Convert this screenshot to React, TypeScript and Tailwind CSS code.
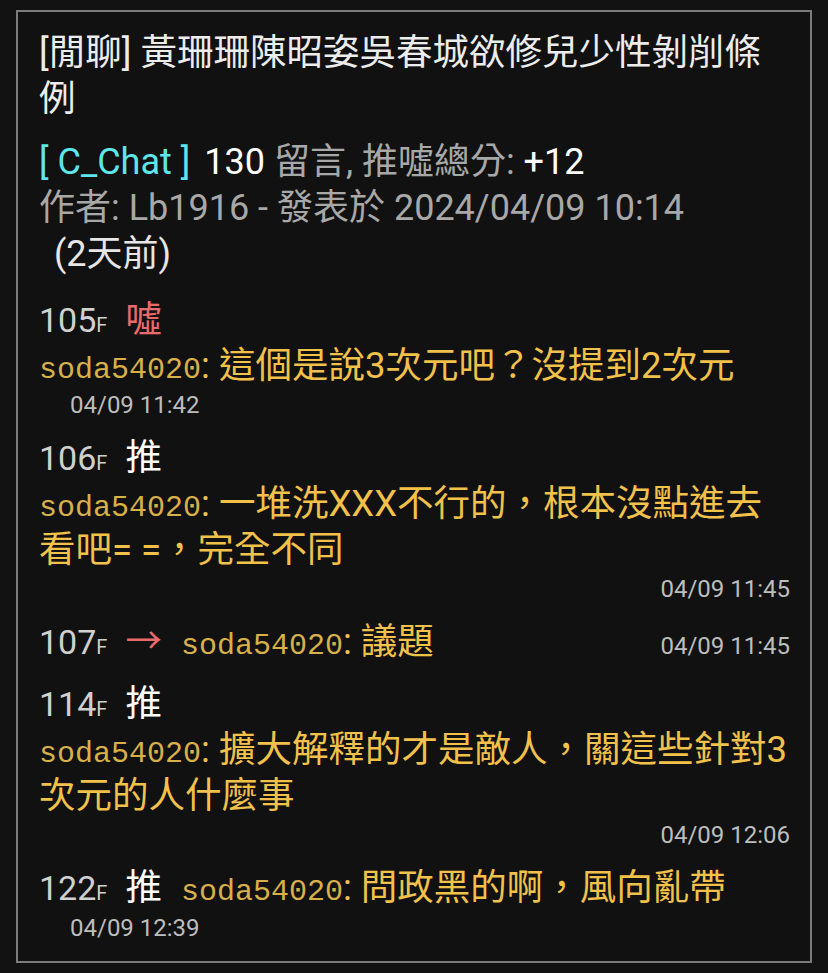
import React from 'react';

type Comment = {
  floor: string;
  tag: string;
  user: string;
  lines: string[];
  time: string;
  // inline: everything on the floor line; stacked: text starts on its own line
  layout: 'inline' | 'stacked';
  timePos: 'left' | 'right' | 'same';
};

const COMMENTS: Comment[] = [
  { floor: '105', tag: '噓', user: 'soda54020', lines: ['這個是說3次元吧？沒提到2次元'], time: '04/09 11:42', layout: 'stacked', timePos: 'left' },
  { floor: '106', tag: '推', user: 'soda54020', lines: ['一堆洗XXX不行的，根本沒點進去', '看吧= =，完全不同'], time: '04/09 11:45', layout: 'stacked', timePos: 'right' },
  { floor: '107', tag: '→', user: 'soda54020', lines: ['議題'], time: '04/09 11:45', layout: 'inline', timePos: 'same' },
  { floor: '114', tag: '推', user: 'soda54020', lines: ['擴大解釋的才是敵人，關這些針對3', '次元的人什麼事'], time: '04/09 12:06', layout: 'stacked', timePos: 'right' },
  { floor: '122', tag: '推', user: 'soda54020', lines: ['問政黑的啊，風向亂帶'], time: '04/09 12:39', layout: 'inline', timePos: 'left' },
];

function Tag({ tag }: { tag: string }) {
  const color = tag === '推' ? 'text-white' : 'text-[#e86a6a]';
  return (
    <span className={`ml-[18px] leading-none font-['Noto_Sans_CJK_TC',sans-serif] ${color}`}>{tag}</span>
  );
}

function Floor({ floor }: { floor: string }) {
  return (
    <span className="text-[#d0d0d0] leading-none">
      <span className="text-[34px] leading-none">{floor}</span>
      <span className="text-[20px] leading-none">F</span>
    </span>
  );
}

function Body({ user, text }: { user: string; text: string }) {
  return (
    <>
      <span className="font-['Liberation_Mono',monospace] text-[30px] leading-none text-[#d8b048]">{user}</span>
      <span className="text-[#f2c14a]">: {text}</span>
    </>
  );
}

function Time({ time }: { time: string }) {
  return <span className="text-[24px] leading-none text-[#bdbdbd]">{time}</span>;
}

const ROW = 'h-[46px] text-[36.5px] leading-[46px] whitespace-nowrap';

function CommentRow({ c }: { c: Comment }) {
  if (c.layout === 'inline') {
    return (
      <div className={c.timePos === 'same' ? 'mb-[2px]' : ''}>
        <div className={`${ROW} flex justify-between`}>
          <div>
            <Floor floor={c.floor} />
            <Tag tag={c.tag} />
            <span className="ml-[19px]" />
            <Body user={c.user} text={c.lines[0]} />
          </div>
          {c.timePos === 'same' && (
            <div>
              <Time time={c.time} />
            </div>
          )}
        </div>
        {c.timePos === 'left' && (
          <div className="h-[32px] text-[24px] leading-[34px] pl-[31px]">
            <Time time={c.time} />
          </div>
        )}
      </div>
    );
  }
  return (
    <div>
      <div className={ROW}>
        <Floor floor={c.floor} />
        <Tag tag={c.tag} />
      </div>
      {c.lines.map((line, i) => (
        <div key={i} className={ROW}>
          {i === 0 ? <Body user={c.user} text={line} /> : <span className="text-[#f2c14a]">{line}</span>}
        </div>
      ))}
      <div className={`h-[32px] text-[24px] leading-[32px] ${c.timePos === 'right' ? 'text-right' : 'pl-[31px]'}`}>
        <Time time={c.time} />
      </div>
    </div>
  );
}

export default function App() {
  return (
    <div className="min-h-screen bg-[#121212] pt-[10px] px-4 pb-2 font-['Roboto','Noto_Sans_CJK_TC',sans-serif]">
      <div className="border-2 border-[#7c7c7c] bg-[#111111] pl-[21px] pr-[20px] pt-[18px] pb-[18px]">
        {/* title */}
        <div className="text-[36.5px] leading-[46px] text-[#ececec]">
          <div className="whitespace-nowrap">[閒聊] 黃珊珊陳昭姿吳春城欲修兒少性剝削條</div>
          <div>例</div>
        </div>

        {/* meta */}
        <div className="mt-[17px] text-[36px] leading-[46px] text-[#a8a8a8]">
          <div className="whitespace-nowrap">
            <span className="text-[#5ee6ea]">[ C_Chat ]</span>
            <span className="ml-[14px] text-white">130</span> 留言, 推噓總分: <span className="text-white">+12</span>
          </div>
          <div className="whitespace-nowrap">作者: Lb1916 - 發表於 2024/04/09 10:14</div>
          <div className="pl-[15px] text-[#e6e6e6]">(2天前)</div>
        </div>

        {/* comments */}
        <div className="mt-[20px] flex flex-col gap-[14px]">
          {COMMENTS.map(c => (
            <CommentRow key={c.floor} c={c} />
          ))}
        </div>
      </div>
    </div>
  );
}
